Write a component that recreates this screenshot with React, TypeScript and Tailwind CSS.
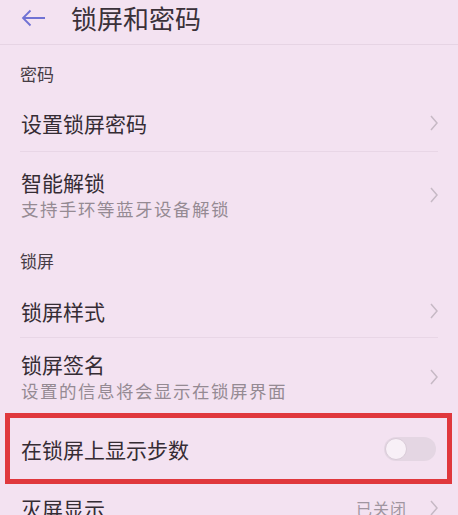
import React from 'react';

const font = { fontFamily: '"Noto Sans CJK SC", "Noto Sans", sans-serif' };

function Chevron() {
  return (
    <svg width="10" height="16" viewBox="0 0 10 16" className="shrink-0">
      <polyline points="2,1 8,8 2,15" fill="none" stroke="#c6b9c5" strokeWidth="1.5" />
    </svg>
  );
}

function SectionHeader({ title, className }: { title: string; className: string }) {
  return (
    <div className={`flex items-center px-[20px] text-[17px] text-[#463c45] ${className}`}>
      {title}
    </div>
  );
}

function Row({
  title,
  subtitle,
  className,
  right,
}: {
  title: string;
  subtitle?: string;
  className: string;
  right?: React.ReactNode;
}) {
  return (
    <div className={`flex items-center pl-[21px] pr-[19px] ${className}`}>
      <div className="flex-1 min-w-0">
        <div className="text-[21px] leading-[26px] text-[#352c34]">{title}</div>
        {subtitle && (
          <div className="mt-[3px] text-[17.5px] leading-[22px] tracking-[1.5px] text-[#958a93] whitespace-nowrap">
            {subtitle}
          </div>
        )}
      </div>
      {right ?? <Chevron />}
    </div>
  );
}

function Divider() {
  return <div className="mx-[20px] h-px bg-[#e8d6e6]" />;
}

export default function App() {
  return (
    <div className="relative w-[458px] h-[515px] overflow-hidden bg-[#f3e2f1]" style={font}>
      {/* Header */}
      <div className="flex items-center h-[45px] pb-[8px] border-b border-[#e6d4e4]">
        <svg width="26" height="18" viewBox="0 0 26 18" className="ml-[21px]">
          <path d="M24 9 H2 M9.5 1.5 L2 9 L9.5 16.5" fill="none" stroke="#7072d4" strokeWidth="1.8" />
        </svg>
        <h1 className="ml-[24px] text-[26px] leading-none text-[#3a3139]">锁屏和密码</h1>
      </div>

      <SectionHeader title="密码" className="h-[50px] pt-[8px]" />
      <Row title="设置锁屏密码" className="h-[56px]" />
      <Divider />
      <Row title="智能解锁" subtitle="支持手环等蓝牙设备解锁" className="h-[79px] pt-[6px]" />

      <SectionHeader title="锁屏" className="h-[54px] pt-[6px]" />
      <Row title="锁屏样式" className="h-[52px]" />
      <Divider />
      <Row title="锁屏签名" subtitle="设置的信息将会显示在锁屏界面" className="h-[75px] pt-[2px]" />
      <Row
        title="在锁屏上显示步数"
        className="h-[72px]"
        right={
          <div className="relative w-[52px] h-[24px] mr-[3px] rounded-full bg-[#e4d6e3]">
            <div className="absolute left-[1px] top-[1px] w-[22px] h-[22px] rounded-full bg-[#f8f0f7] border border-[#d9cbd8]" />
          </div>
        }
      />
      <Row
        title="灭屏显示"
        className="h-[44px] pt-[2px]"
        right={
          <div className="flex items-center gap-[22px]">
            <span className="text-[16px] tracking-[1px] text-[#a095a0]">已关闭</span>
            <Chevron />
          </div>
        }
      />

      {/* Highlight box */}
      <div className="absolute left-[5px] top-[413px] w-[447px] h-[71px] border-[5px] border-[#e0383d]" />
    </div>
  );
}
